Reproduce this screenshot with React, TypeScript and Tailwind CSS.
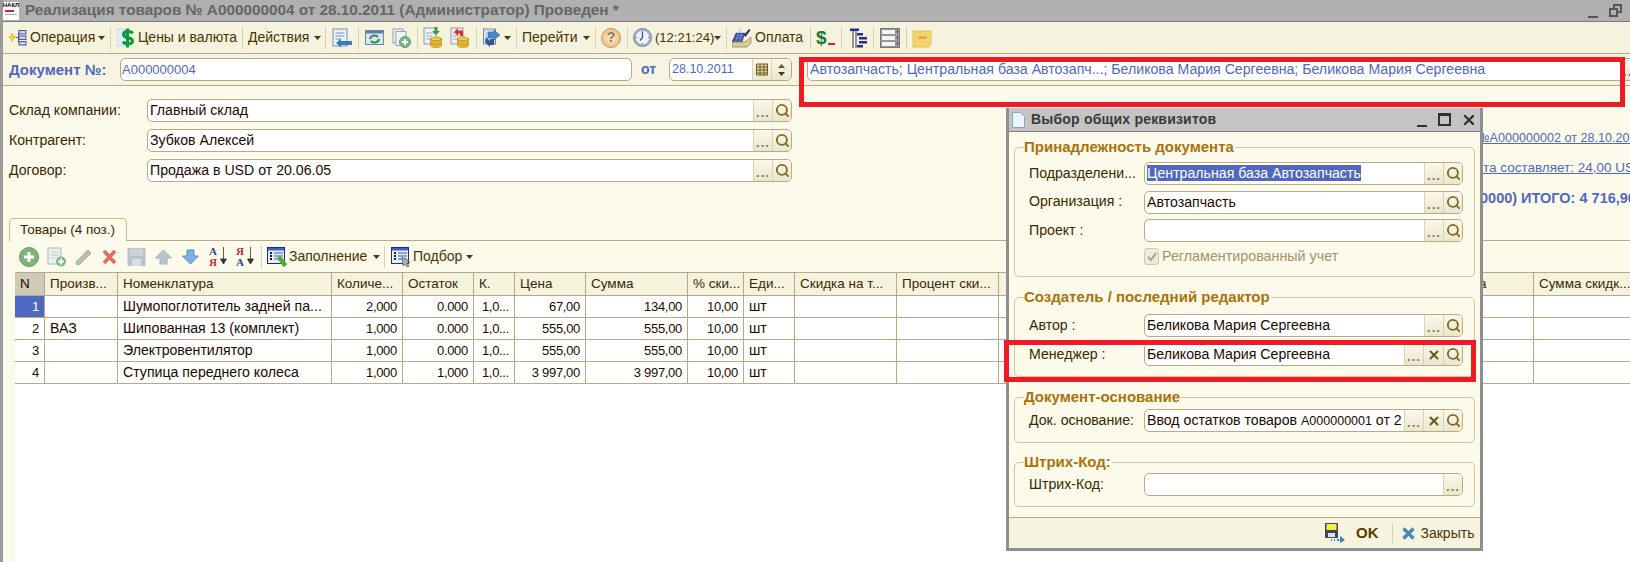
import type { ReactNode } from "react";
import { Search, X } from "lucide-react";

// ---------------------------------------------------------------------------
// Small toolbar pieces
// ---------------------------------------------------------------------------

function Arrow({ className = "" }: { className?: string }) {
  return (
    <svg viewBox="0 0 7 4" className={`h-[4px] w-[7px] shrink-0 ${className}`}>
      <path d="M0 0h7L3.5 4z" fill="#4a3a10" />
    </svg>
  );
}

function Sep({ className = "" }: { className?: string }) {
  return <div className={`h-[22px] w-px shrink-0 bg-[#d8d2b4] ${className}`} />;
}

function OperationIcon() {
  return (
    <svg viewBox="0 0 19 19" className="ml-[5px] h-[19px] w-[19px] shrink-0">
      <path d="M1 9l2-1 1-3 1.500 3 2.500 1-2.500 1.500-1.500 3-1-3z" fill="#f4d832" stroke="#d8a820" strokeWidth=".6" />
      <path d="M8 9.500h2.500M10.500 4.500v10" stroke="#4a5a90" fill="none" />
      <rect x="11" y="2.500" width="7" height="3.500" fill="#c8d4ec" stroke="#4a5a90" />
      <rect x="11" y="8" width="7" height="3.500" fill="#c8d4ec" stroke="#4a5a90" />
      <rect x="11" y="13.500" width="7" height="3.500" fill="#c8d4ec" stroke="#4a5a90" />
    </svg>
  );
}

function DollarDocIcon() {
  return (
    <svg viewBox="0 0 17 20" className="ml-[6px] h-[20px] w-[17px] shrink-0">
      <rect x="0" y="1" width="10" height="17" fill="#e2ecf8" stroke="#a8bedc" strokeDasharray="1 1" />
      <path d="M15.500 5.500c-1-2.500-9-3-9 1 0 4.500 9 2 9 6.500 0 4-8 3.500-9.500 .500M10.500 .5v19" fill="none" stroke="#0e9a38" strokeWidth="3" />
    </svg>
  );
}

function BackDocIcon() {
  return (
    <svg viewBox="0 0 20 20" className="ml-[6px] h-[20px] w-[20px] shrink-0">
      <rect x="1" y="1" width="14" height="17" fill="#eef2f8" stroke="#7890b8" />
      <path d="M3.500 5h9M3.500 8h9M3.500 11h5" stroke="#7890b8" />
      <path d="M20 13H9V10.500L4 15l5 4.500V17h11z" fill="#3a7cc0" />
    </svg>
  );
}

function RefreshIcon() {
  return (
    <svg viewBox="0 0 19 19" className="ml-[6px] h-[19px] w-[19px] shrink-0">
      <rect x=".5" y="2.500" width="18" height="14" fill="#dce6f0" stroke="#6c88a8" />
      <rect x="1" y="3" width="17" height="2.500" fill="#5c80a8" />
      <path d="M5 11a4.500 4 0 0 1 8-2M14 11a4.500 4 0 0 1-8 2" fill="none" stroke="#2e8e4a" strokeWidth="2" />
    </svg>
  );
}

function CopyPlusIcon() {
  return (
    <svg viewBox="0 0 19 20" className="ml-[8px] h-[20px] w-[19px] shrink-0">
      <rect x="1" y="1" width="10" height="14" fill="#e8ecf0" stroke="#9aa4b0" />
      <rect x="4" y="3.500" width="10" height="14" fill="#f2f4f6" stroke="#9aa4b0" />
      <circle cx="13" cy="14" r="5.500" fill="#7cb88c" stroke="#5a9a6c" />
      <path d="M13 11v6M10 14h6" stroke="#fff" strokeWidth="1.800" />
    </svg>
  );
}

function CoinDocIcon({ back = false, className = "" }: { back?: boolean; className?: string }) {
  return (
    <svg viewBox="0 0 19 21" className={`h-[21px] w-[19px] shrink-0 ${className}`}>
      <rect x="1" y="1" width="12" height="16" fill="#eef2f6" stroke="#8c9cb0" />
      <path d="M3 6h8M3 9h6M3 12h5" stroke="#a0acbc" />
      {back ? (
        <path d="M4 5l4-4v2.500h5V9H10V6.500H8V9z" fill="#d8342c" />
      ) : (
        <path d="M13 8l4-4h-2.500V0h-3v4H9z" fill="#3a9a3c" />
      )}
      <ellipse cx="13" cy="12" rx="5.500" ry="2" fill="#f0cc50" stroke="#b88c20" strokeWidth=".7" />
      <path d="M7.500 12v6.500c0 1 2.500 2 5.500 2s5.500-1 5.500-2V12c0 1-2.500 2-5.500 2s-5.500-1-5.500-2z" fill="#e8b830" stroke="#b88c20" strokeWidth=".7" />
      <path d="M7.500 15.500c0 1 2.500 2 5.500 2s5.500-1 5.500-2" fill="none" stroke="#b88c20" strokeWidth=".7" />
    </svg>
  );
}

function ExchangeIcon() {
  return (
    <svg viewBox="0 0 18 19" className="ml-[6px] h-[19px] w-[18px] shrink-0">
      <rect x=".5" y="1" width="12" height="15" fill="#d8dee8" stroke="#7c8ca4" />
      <path d="M5 4l6 0 0-2 6 5-6 5v-2H5z" fill="#4a86c4" stroke="#2a5a94" strokeWidth=".5" />
      <path d="M3 9l4 4v-2h4v6H7v2l-5-5z" fill="#2c5a94" />
    </svg>
  );
}

function HelpIcon() {
  return (
    <div className="ml-[5px] flex h-[20px] w-[20px] shrink-0 items-center justify-center rounded-full border border-[#c09660] bg-radial from-[#fde8c8] to-[#eab46c] text-[14px] font-bold text-[#8a7a68]">
      ?
    </div>
  );
}

function ClockIcon() {
  return (
    <svg viewBox="0 0 19 19" className="ml-[5px] h-[19px] w-[19px] shrink-0">
      <circle cx="9.500" cy="9.500" r="9" fill="#9cb2d4" stroke="#7288a8" />
      <circle cx="9.500" cy="9.500" r="6.800" fill="#eef2f8" />
      <path d="M9.500 4v5.500l-2.500 3" fill="none" stroke="#2c4a90" strokeWidth="1.200" />
      <path d="M9.500 3v1M9.500 15v1M3 9.500h1M15 9.500h1" stroke="#d05040" />
    </svg>
  );
}

function CashIcon() {
  return (
    <svg viewBox="0 0 20 20" className="ml-[5px] h-[20px] w-[20px] shrink-0">
      <path d="M0 14l4-9h9l-3 9z" fill="#3c50a8" stroke="#283880" strokeWidth=".5" />
      <path d="M3 10h7M5 7.500h6M6.500 5l-3 9M10 5l-3 9" stroke="#8c9cd8" strokeWidth=".7" />
      <path d="M12 7l5-6 1.500 1-5 7z" fill="#303030" />
      <circle cx="8" cy="2.500" r="1.800" fill="#d0d8e8" />
      <path d="M0 14h13l6-5v6l-4 4H0z" fill="#d8cc98" stroke="#8a7c48" strokeWidth=".7" />
    </svg>
  );
}

function DollarMinusIcon() {
  return (
    <div className="ml-[5px] flex h-[20px] w-[19px] shrink-0 items-start">
      <span className="text-[19px] font-bold leading-[19px] text-[#1a7a3c]">$</span>
      <div className="mt-[15px] ml-px h-[2px] w-[9px] bg-[#e02020]" />
    </div>
  );
}

function TreeIcon() {
  return (
    <svg viewBox="0 0 17 20" className="ml-[8px] h-[20px] w-[17px] shrink-0">
      <path d="M3 1v19M6 1v19" stroke="#3a3a3a" />
      <path d="M0 .5h9v2.500H0z" fill="#20309a" />
      <path d="M7 5h6v2.500H7zM9 9h8v2.500H9zM9 13h8v2.500H9zM7 17h6v2.500H7z" fill="#20309a" />
    </svg>
  );
}

function RowsIcon() {
  return (
    <svg viewBox="0 0 20 20" className="ml-[6px] h-[20px] w-[20px] shrink-0">
      <rect x=".5" y=".5" width="19" height="19" fill="#989898" stroke="#787878" />
      <rect x="2" y="2" width="13" height="4" fill="#f4f4f4" />
      <rect x="2" y="8" width="13" height="4" fill="#f4f4f4" />
      <rect x="2" y="14" width="13" height="4" fill="#f4f4f4" />
      <path d="M17 3.500h1M17 9.500h1M17 15.500h1" stroke="#303030" strokeWidth="2" />
    </svg>
  );
}

function NoteIcon() {
  return (
    <svg viewBox="0 0 20 20" className="ml-[5px] h-[20px] w-[20px] shrink-0">
      <path d="M1 3h18v14l-2 2H1z" fill="#f4d468" stroke="#e4c058" />
      <path d="M6 9l3-1 2 1 3-1 1 1-1 2H7z" fill="#e8946c" />
    </svg>
  );
}

function TabIcon({ name, className = "" }: { name: string; className?: string }) {
  const base = `h-[20px] shrink-0 ${className}`;
  if (name === "plus") {
    return (
      <svg viewBox="0 0 20 20" className={`w-[20px] ${base}`}>
        <circle cx="10" cy="10" r="9.500" fill="#7cb47c" stroke="#6a9a6a" />
        <path d="M10 5v10M5 10h10" stroke="#fff" strokeWidth="3" />
      </svg>
    );
  }
  if (name === "copy") {
    return (
      <svg viewBox="0 0 20 20" className={`w-[20px] ${base}`}>
        <rect x="1" y="1" width="13" height="16" fill="#eef0f2" stroke="#b0b8bc" />
        <path d="M3.500 5h8M3.500 8h8M3.500 11h5" stroke="#c0c8cc" />
        <circle cx="14" cy="14.500" r="5" fill="#80b88c" />
        <path d="M14 11.500v6M11 14.500h6" stroke="#fff" strokeWidth="1.800" />
      </svg>
    );
  }
  if (name === "pencil") {
    return (
      <svg viewBox="0 0 17 20" className={`w-[17px] ${base}`}>
        <path d="M1 15l1 3 3-1L16 6l-3-3z" fill="#b8c0a8" stroke="#a8b098" />
      </svg>
    );
  }
  if (name === "delete") {
    return (
      <svg viewBox="0 0 15 20" className={`w-[15px] ${base}`}>
        <path d="M2 4l11 12M13 4L2 16" stroke="#e46a5c" strokeWidth="3.600" />
      </svg>
    );
  }
  if (name === "save") {
    return (
      <svg viewBox="0 0 19 20" className={`w-[19px] ${base}`}>
        <rect x=".5" y="1" width="18" height="18" fill="#b8c4cc" />
        <rect x="3" y="2" width="13" height="7" fill="#ccd4da" />
        <rect x="5" y="12" width="9" height="7" fill="#d8dee2" />
      </svg>
    );
  }
  if (name === "up") {
    return (
      <svg viewBox="0 0 17 20" className={`w-[17px] ${base}`}>
        <path d="M8.500 3L16.500 11H12v6H5v-6H.5z" fill="#b8c4cc" stroke="#a8b4bc" />
      </svg>
    );
  }
  if (name === "down") {
    return (
      <svg viewBox="0 0 17 20" className={`w-[17px] ${base}`}>
        <path d="M8.500 17L16.500 9H12V3H5v6H.5z" fill="#80b0e0" stroke="#5c90c8" />
      </svg>
    );
  }
  return null;
}

function SortIcon({ first, second, className = "" }: { first: string; second: string; className?: string }) {
  return (
    <div className={`flex h-[22px] w-[18px] shrink-0 ${className}`}>
      <div className="flex w-[11px] flex-col text-[11px] font-bold leading-[11px] font-['Liberation_Serif',serif]">
        <span className={first === "A" ? "text-[#2a4a9a]" : "text-[#b83030]"}>{first}</span>
        <span className={second === "A" ? "text-[#2a4a9a]" : "text-[#b83030]"}>{second}</span>
      </div>
      <svg viewBox="0 0 7 20" className="h-[20px] w-[7px]">
        <path d="M3.500 1v15M.5 13l3 5 3-5z" stroke="#333" fill="#333" strokeWidth=".8" />
      </svg>
    </div>
  );
}

function FillIcon({ cursor = false, className = "" }: { cursor?: boolean; className?: string }) {
  return (
    <svg viewBox="0 0 20 20" className={`h-[20px] w-[20px] shrink-0 ${className}`}>
      <rect x=".5" y=".5" width="17" height="16" fill="#e8eef8" stroke="#20288a" />
      <rect x="1" y="1" width="16" height="2.500" fill="#4060c8" />
      <path d="M3 6h2M3 9h2M3 12h2" stroke="#202020" strokeWidth="2" />
      <path d="M7 6h9M7 9h9M7 12h9" stroke="#6c88d8" strokeWidth="1.500" />
      {cursor ? (
        <path d="M11 10l8 5-3 1 2 3-2 1-2-3-2 2z" fill="#b0b0b0" stroke="#505050" strokeWidth=".7" />
      ) : (
        <path d="M10 11l3-2 7 8-3 3z" fill="#3cb038" stroke="#a0a820" strokeWidth=".7" />
      )}
    </svg>
  );
}

// ---------------------------------------------------------------------------
// Form fields
// ---------------------------------------------------------------------------

function Dots() {
  return (
    <div className="flex w-[19px] shrink-0 items-end justify-center border-l border-[#d8d2b4] bg-linear-to-b from-[#fbf8ea] to-[#ebe6ce] pb-[2px] text-[13px] leading-[13px] font-bold tracking-[1px] text-[#8a7a48]">
      ...
    </div>
  );
}

function Clear() {
  return (
    <div className="flex w-[20px] shrink-0 items-center justify-center border-l border-[#d8d2b4] bg-linear-to-b from-[#fbf8ea] to-[#ebe6ce]">
      <X size={14} strokeWidth={3.5} color="#6a5a20" />
    </div>
  );
}

function Lookup() {
  return (
    <div className="flex w-[19px] shrink-0 items-center justify-center border-l border-[#d8d2b4] bg-linear-to-b from-[#fbf8ea] to-[#ebe6ce]">
      <Search size={15} strokeWidth={3} color="#806a28" />
    </div>
  );
}

function Field({
  children,
  clear = false,
  lookup = true,
  className = "",
}: {
  children?: ReactNode;
  clear?: boolean;
  lookup?: boolean;
  className?: string;
}) {
  return (
    <div className={`flex h-[23px] overflow-hidden rounded-[5px] border border-[#b5ab85] bg-white ${className}`}>
      <div className="min-w-0 flex-1 overflow-hidden pl-[2px] text-[14.150px] leading-[20px] whitespace-nowrap text-[#1c0a00]">
        {children}
      </div>
      <Dots />
      {clear && <Clear />}
      {lookup && <Lookup />}
    </div>
  );
}

function FormRow({ label, children }: { label: string; children?: ReactNode }) {
  return (
    <div className="flex h-[23px] items-center">
      <div className="w-[144px] shrink-0 pl-[6px] text-[14.150px] whitespace-nowrap text-[#3a2800]">{label}</div>
      <Field className="flex-1">{children}</Field>
    </div>
  );
}

function DialogRow({ label, children, clear, lookup }: { label: string; children?: ReactNode; clear?: boolean; lookup?: boolean }) {
  return (
    <div className="flex h-[23px] items-center">
      <div className="w-[129px] shrink-0 pl-[14px] text-[14.150px] whitespace-nowrap text-[#3a2800]">{label}</div>
      <Field clear={clear} lookup={lookup} className="w-[319px] shrink-0">
        {children}
      </Field>
    </div>
  );
}

function Group({ title, className, children }: { title: string; className: string; children: ReactNode }) {
  return (
    <div className={`relative rounded-[5px] border border-[#cfc8a6] ${className}`}>
      <div className="absolute top-[-10px] left-[9px] bg-[#fcfaeb] pr-px text-[15px] leading-[18px] font-bold whitespace-nowrap text-[#a8720c]">
        {title}
      </div>
      {children}
    </div>
  );
}

// ---------------------------------------------------------------------------
// Grid
// ---------------------------------------------------------------------------

const GRID_COLS =
  "grid grid-cols-[29px_73px_214px_71px_71px_41px_71px_102px_56px_51px_102px_102px_440px_95px_97px]";

const HEADERS = [
  "N",
  "Произв...",
  "Номенклатура",
  "Количе...",
  "Остаток",
  "К.",
  "Цена",
  "Сумма",
  "% ски...",
  "Еди...",
  "Скидка на т...",
  "Процент ски...",
  "",
  "Сумма",
  "Сумма скидк...",
];

const ROWS = [
  ["1", "", "Шумопоглотитель задней па...", "2,000", "0.000", "1,0...", "67,00", "134,00", "10,00", "шт"],
  ["2", "ВАЗ", "Шипованная 13 (комплект)", "1,000", "0.000", "1,0...", "555,00", "555,00", "10,00", "шт"],
  ["3", "", "Электровентилятор", "1,000", "0.000", "1,0...", "555,00", "555,00", "10,00", "шт"],
  ["4", "", "Ступица переднего колеса", "1,000", "1,000", "1,0...", "3 997,00", "3 997,00", "10,00", "шт"],
];

const RIGHT_COLS = new Set([0, 3, 4, 5, 6, 7, 8]);

function Grid() {
  return (
    <div className="ml-[12px] flex-1 bg-white text-[13.500px]">
      <div className={`${GRID_COLS} h-[24px] border-y border-[#b5ab85] bg-[#f5f2de] leading-[22px] text-[#3a2800]`}>
        {HEADERS.map((h, i) => (
          <div
            key={i}
            className={
              i === 0
                ? "bg-[#cfcbb6] pl-[5px] text-[#1c0a00]"
                : "overflow-hidden border-l border-[#b5ab85] pl-[5px] whitespace-nowrap"
            }
          >
            {h}
          </div>
        ))}
      </div>
      {ROWS.map((row, r) => (
        <div key={r} className={`${GRID_COLS} h-[22px] border-b border-[#b5ab85] leading-[21px] text-[#1c0a00]`}>
          {HEADERS.map((_, c) => (
            <div
              key={c}
              className={`overflow-hidden whitespace-nowrap ${c > 0 ? "border-l border-[#b5ab85]" : ""} ${
                RIGHT_COLS.has(c) ? "pr-[5px] text-right text-[13px] tracking-[-.3px]" : "pl-[5px] text-[14.150px]"
              } ${r === 0 && c === 0 ? "bg-[#5068bf] text-white" : ""}`}
            >
              {row[c] ?? ""}
            </div>
          ))}
        </div>
      ))}
    </div>
  );
}

// ---------------------------------------------------------------------------
// Dialog over the document window
// ---------------------------------------------------------------------------

function CommonDetailsDialog() {
  return (
    <div className="absolute top-[108px] left-[1006px] flex h-[443px] w-[477px] flex-col border-x-[3px] border-b-[3px] border-[#8f8f8f] bg-[#fcfaeb]">
      <div className="flex h-[24px] shrink-0 items-center border-b border-[#808080] bg-[#c4c4c4] pl-[3px]">
        <svg viewBox="0 0 13 16" className="h-[16px] w-[13px] shrink-0">
          <path d="M.5.5h8l4 4v11H.5z" fill="#eef4fb" stroke="#8ca4c4" />
        </svg>
        <div className="ml-[6px] text-[14px] font-bold tracking-[.2px] whitespace-nowrap text-[#3a3a3a]">Выбор общих реквизитов</div>
        <div className="ml-auto mt-[13px] h-[2px] w-[10px] bg-[#303030]" />
        <div className="ml-[11px] h-[13px] w-[13px] border-2 border-t-[3px] border-[#303030]" />
        <X size={16} strokeWidth={3.5} color="#303030" className="mr-[3px] ml-[10px]" />
      </div>

      <div className="flex flex-col px-[5px] pt-[15px]">
        <Group title="Принадлежность документа" className="h-[130px]">
          <div className="flex flex-col gap-[5.500px] pt-[14px]">
            <DialogRow label="Подразделени...">
              <span className="bg-[#5068bf] text-white">Центральная база Автозапчасть</span>
            </DialogRow>
            <DialogRow label="Организация :">Автозапчасть</DialogRow>
            <DialogRow label="Проект :" />
            <div className="flex h-[18px] items-center pl-[129px]">
              <div className="flex h-[17px] w-[15px] items-center justify-center rounded-[3px] border border-[#d0caac] bg-[#efebd8]">
                <svg viewBox="0 0 10 10" className="h-[10px] w-[10px]">
                  <path d="M1 5l3 3 5-7" fill="none" stroke="#a8a288" strokeWidth="2" />
                </svg>
              </div>
              <span className="ml-[3px] text-[14.300px] whitespace-nowrap text-[#a09468]">Регламентированный учет</span>
            </div>
          </div>
        </Group>

        <Group title="Создатель / последний редактор" className="mt-[20px] h-[80px]">
          <div className="flex flex-col gap-[6px] pt-[16px]">
            <DialogRow label="Автор :">Беликова Мария Сергеевна</DialogRow>
            <DialogRow label="Менеджер :" clear>
              Беликова Мария Сергеевна
            </DialogRow>
          </div>
        </Group>

        <Group title="Документ-основание" className="mt-[20px] h-[46px]">
          <div className="pt-[11px]">
            <DialogRow label="Док. основание:" clear>
              Ввод остатков товаров <span className="text-[12.500px]">А000000001</span> от 2
            </DialogRow>
          </div>
        </Group>

        <Group title="Штрих-Код:" className="mt-[19px] h-[45px]">
          <div className="pt-[10px]">
            <DialogRow label="Штрих-Код:" lookup={false} />
          </div>
        </Group>
      </div>

      <div className="mt-[10px] flex flex-1 items-center border-t border-[#b5ab85] bg-[#f6f3e0] pl-[316px]">
        <svg viewBox="0 0 20 20" className="h-[20px] w-[20px] shrink-0">
          <rect x="0" y="0" width="13" height="15" fill="#404850" />
          <rect x="1.500" y="1" width="10" height="6" fill="#f4f048" />
          <rect x="3" y="10" width="7" height="4" fill="#e0e4e8" />
          <path d="M6 17h1M9 17h1M12 17h2" stroke="#3a78b8" strokeWidth="2" />
          <path d="M15 13l5 4-5 3z" fill="#3a78b8" />
        </svg>
        <div className="ml-[11px] text-[15px] font-bold text-[#5a3c00]">OK</div>
        <div className="ml-[13px] h-[20px] w-px bg-[#d8d2b4]" />
        <svg viewBox="0 0 13 13" className="ml-[9px] h-[13px] w-[13px] shrink-0">
          <path d="M1.500 1.500l10 10M11.500 1.500l-10 10" stroke="#4a88b8" strokeWidth="3.400" />
        </svg>
        <div className="ml-[6px] text-[14px] whitespace-nowrap text-[#4a3400]">Закрыть</div>
      </div>
    </div>
  );
}

// ---------------------------------------------------------------------------
// Page
// ---------------------------------------------------------------------------

export default function App() {
  return (
    <div className="relative flex h-[562px] w-[1630px] overflow-hidden bg-[#fcfaeb] font-['Liberation_Sans',Arial,sans-serif]">
      <div className="w-[3px] shrink-0 bg-[#9a9a9a]" />
      <div className="flex min-w-0 flex-1 flex-col">
        {/* title bar */}
        <div className="flex h-[22px] shrink-0 items-center border-b border-[#7c7c7c] bg-[#b0b0b0]">
          <div className="flex h-[18px] w-[16px] shrink-0 flex-col items-center bg-white">
            <span className="text-[6px] leading-[7px] font-bold text-black">НАКЛ</span>
            <div className="mt-px mr-[4px] h-[2px] w-[9px] bg-[#e02020]" />
            <div className="mt-[2px] h-px w-[12px] bg-[#90a8d0]" />
          </div>
          <div className="ml-[6px] text-[15.300px] font-bold whitespace-nowrap text-[#666666]">
            Реализация товаров № А000000004 от 28.10.2011 (Администратор) Проведен *
          </div>
          <div className="mt-[12px] ml-auto h-[2px] w-[10px] bg-[#555555]" />
          <div className="relative mr-[8px] ml-[11px] h-[13px] w-[13px]">
            <div className="absolute top-0 right-0 h-[9px] w-[9px] border-2 border-[#555555]" />
            <div className="absolute bottom-0 left-0 h-[9px] w-[9px] border-2 border-[#555555] bg-[#b0b0b0]" />
          </div>
        </div>

        {/* main toolbar */}
        <div className="flex h-[31px] shrink-0 items-center bg-[#f5f2de] text-[14px] text-[#4a3400]">
          <OperationIcon />
          <div className="ml-[3px] w-[65px] shrink-0">Операция</div>
          <Arrow className="ml-[3px]" />
          <Sep className="ml-[5px]" />
          <DollarDocIcon />
          <div className="ml-[4px] w-[96px] shrink-0 whitespace-nowrap">Цены и валюта</div>
          <Sep className="ml-[8px]" />
          <div className="ml-[5px] w-[62px] shrink-0">Действия</div>
          <Arrow className="ml-[4px]" />
          <Sep className="ml-[4px]" />
          <BackDocIcon />
          <Sep className="ml-[6px]" />
          <RefreshIcon />
          <CopyPlusIcon />
          <Sep className="ml-[6px]" />
          <CoinDocIcon className="ml-[5px]" />
          <CoinDocIcon back className="ml-[8px]" />
          <Sep className="ml-[7px]" />
          <ExchangeIcon />
          <Arrow className="ml-[3px]" />
          <Sep className="ml-[5px]" />
          <div className="ml-[5px] w-[57px] shrink-0">Перейти</div>
          <Arrow className="ml-[4px]" />
          <Sep className="ml-[5px]" />
          <HelpIcon />
          <Sep className="ml-[6px]" />
          <ClockIcon />
          <div className="ml-[3px] w-[56px] shrink-0 text-[13px] whitespace-nowrap">(12:21:24)</div>
          <Arrow className="ml-[3px]" />
          <Sep className="ml-[5px]" />
          <CashIcon />
          <div className="ml-[3px] w-[47px] shrink-0">Оплата</div>
          <Sep className="ml-[8px]" />
          <DollarMinusIcon />
          <Sep className="ml-[6px]" />
          <TreeIcon />
          <Sep className="ml-[6px]" />
          <RowsIcon />
          <Sep className="ml-[6px]" />
          <NoteIcon />
        </div>

        {/* document number row */}
        <div className="flex h-[33px] shrink-0 items-start border-y border-[#b5ab85] bg-[#f7f4e3] pt-[4px]">
          <div className="ml-[6px] h-[23px] w-[111px] shrink-0 text-[15px] leading-[23px] font-bold whitespace-nowrap text-[#5068bf]">
            Документ №:
          </div>
          <div className="h-[23px] w-[512px] shrink-0 rounded-[5px] border border-[#b5ab85] bg-white pl-[1px] text-[13px] leading-[21px] text-[#5068bf]">
            А000000004
          </div>
          <div className="ml-[9px] w-[28px] shrink-0 text-[14px] leading-[23px] font-bold text-[#5068bf]">от</div>
          <div className="flex h-[23px] w-[123px] shrink-0 overflow-hidden rounded-[5px] border border-[#b5ab85] bg-white text-[12.500px] leading-[21px] text-[#5068bf]">
            <div className="flex-1 pl-[2px]">28.10.2011</div>
            <div className="flex w-[19px] items-center justify-center border-l border-[#d8d2b4] bg-linear-to-b from-[#fbf8ea] to-[#ebe6ce]">
              <svg viewBox="0 0 12 13" className="h-[13px] w-[12px]">
                <path d="M.5 1h11v11H.5zM.5 4h11M.5 7h11M.5 10h11M4 1v11M8 1v11" fill="#e8d8a0" stroke="#6a5a28" />
              </svg>
            </div>
            <div className="flex w-[20px] flex-col items-center justify-center gap-[4px] border-l border-[#d8d2b4] bg-linear-to-b from-[#fbf8ea] to-[#ebe6ce]">
              <svg viewBox="0 0 7 4" className="h-[4px] w-[7px]">
                <path d="M0 4h7L3.500 0z" fill="#6a5a28" />
              </svg>
              <Arrow />
            </div>
          </div>
          <div className="ml-[15px] flex h-[23px] w-[833px] shrink-0 overflow-hidden rounded-[5px] border border-[#b5ab85] bg-white text-[14.150px] leading-[21px] text-[#5068bf]">
            <div className="flex-1 pl-[2px] whitespace-nowrap">
              Автозапчасть; Центральная база Автозапч...; Беликова Мария Сергеевна; Беликова Мария Сергеевна
            </div>
            <Dots />
          </div>
        </div>

        {/* head of the document */}
        <div className="flex h-[132px] shrink-0 pt-[13px]">
          <div className="flex w-[789px] shrink-0 flex-col gap-[7px]">
            <FormRow label="Склад компании:">Главный склад</FormRow>
            <FormRow label="Контрагент:">Зубков Алексей</FormRow>
            <FormRow label="Договор:">Продажа в USD от 20.06.05</FormRow>
          </div>
          <div className="ml-[691px] min-w-0 flex-1 overflow-hidden pt-[31px] text-[13.500px] whitespace-nowrap text-[#5068bf]">
            <div className="ml-[-7px] h-[16px] text-[12.600px] leading-[16px] underline">№А000000002 от 28.10.2011</div>
            <div className="mt-[14px] h-[16px] leading-[16px] underline">та составляет: 24,00 USD</div>
            <div className="mt-[14px] ml-[-3px] h-[17px] text-[14.500px] leading-[17px] font-bold">0000) ИТОГО: 4 716,90</div>
          </div>
        </div>

        {/* tab strip */}
        <div className="flex h-[23px] shrink-0 items-end">
          <div className="ml-[6px] h-[23px] w-[118px] shrink-0 rounded-t-[5px] border-x border-t border-[#c8bc88] bg-[#fcfaeb] pl-[10px] text-[13.500px] leading-[22px] text-[#3a2800]">
            Товары (4 поз.)
          </div>
          <div className="h-px flex-1 bg-[#b5ab85]" />
        </div>

        {/* tab toolbar */}
        <div className="flex h-[31px] shrink-0 items-center text-[14px] text-[#4a3400]">
          <TabIcon name="plus" className="ml-[16px]" />
          <TabIcon name="copy" className="ml-[8px]" />
          <TabIcon name="pencil" className="ml-[8px]" />
          <TabIcon name="delete" className="ml-[10px]" />
          <TabIcon name="save" className="ml-[10px]" />
          <TabIcon name="up" className="ml-[9px]" />
          <TabIcon name="down" className="ml-[10px]" />
          <SortIcon first="A" second="Я" className="ml-[10px]" />
          <SortIcon first="Я" second="A" className="ml-[9px]" />
          <Sep className="ml-[7px]" />
          <FillIcon className="ml-[5px]" />
          <div className="ml-[2px] w-[80px] shrink-0">Заполнение</div>
          <Arrow className="ml-[4px]" />
          <Sep className="ml-[4px]" />
          <FillIcon cursor className="ml-[6px]" />
          <div className="ml-[2px] w-[50px] shrink-0">Подбор</div>
          <Arrow className="ml-[3px]" />
        </div>

        <Grid />
      </div>

      <CommonDetailsDialog />

      {/* red marks drawn on the screenshot */}
      <div className="absolute top-[57px] left-[799px] h-[50px] w-[826px] border-[5px] border-[#ed1c24]" />
      <div className="absolute top-[340px] left-[1004px] h-[42px] w-[472px] border-[5px] border-[#ed1c24]" />
    </div>
  );
}
